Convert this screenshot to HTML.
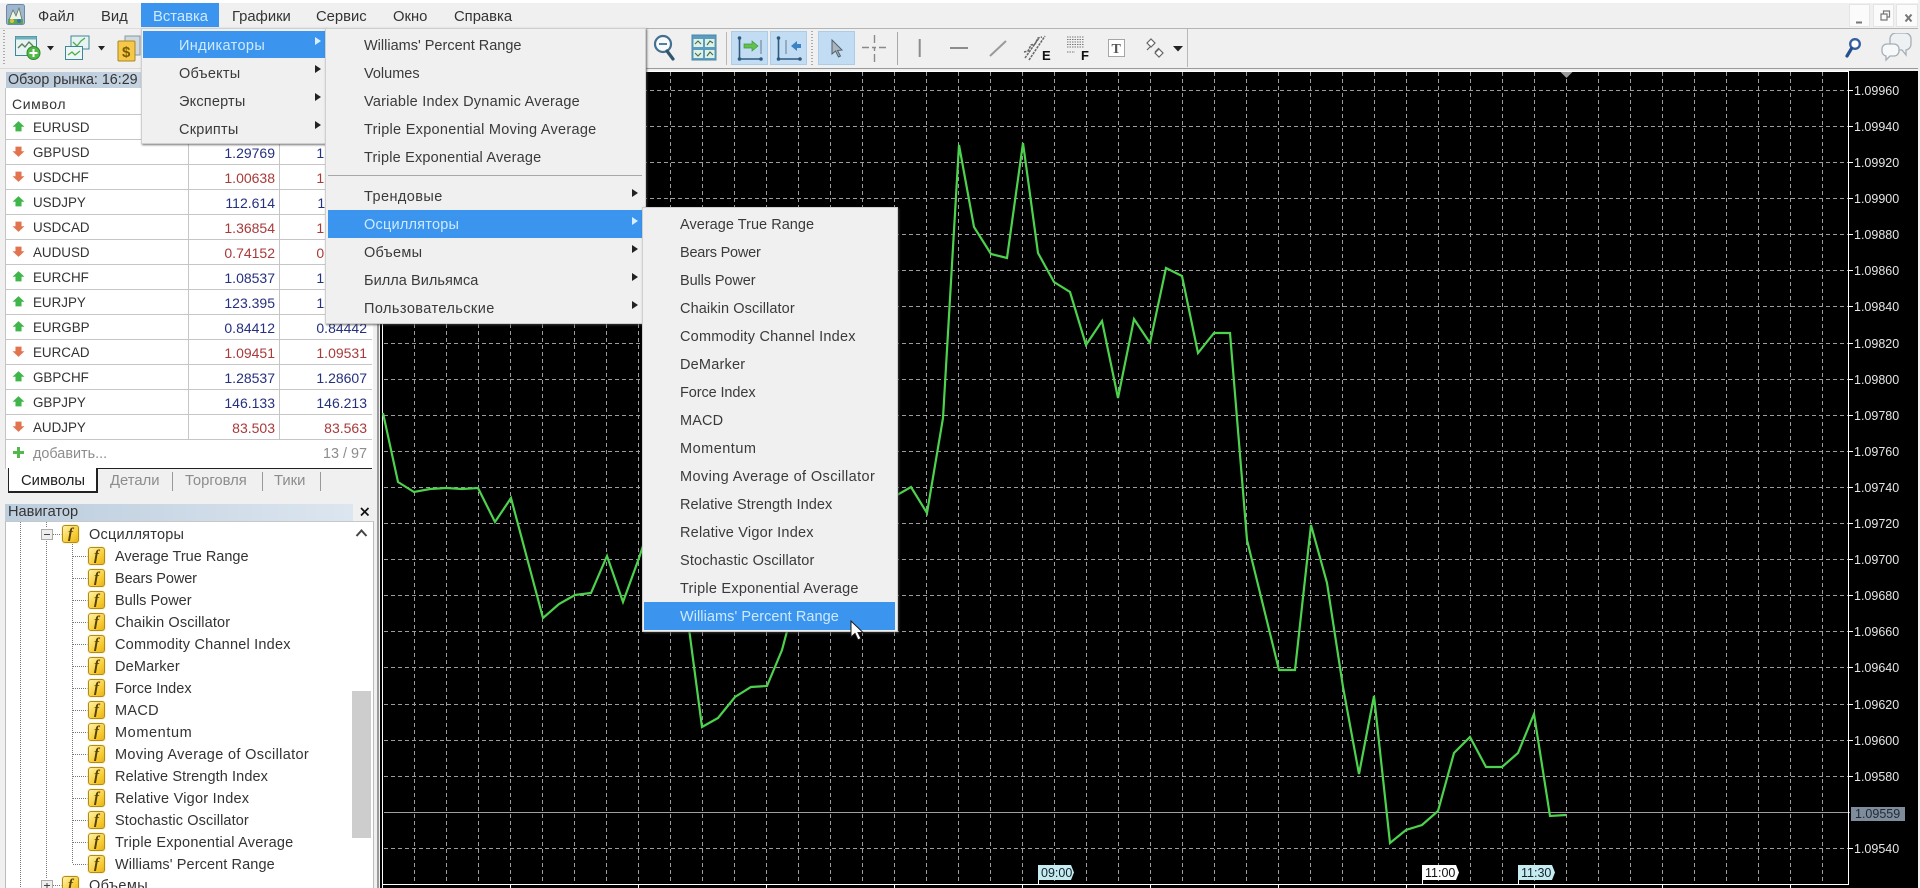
<!DOCTYPE html>
<html lang="ru"><head><meta charset="utf-8"><title>MetaTrader</title>
<style>
html,body{margin:0;padding:0;width:1920px;height:888px;overflow:hidden;background:#f0f0f0}
body{position:relative;font-family:"Liberation Sans","Noto Sans CJK SC",sans-serif;font-size:14.5px;color:#333}
div{box-sizing:border-box}
.a{position:absolute}
.t{position:absolute;white-space:nowrap;line-height:20px;height:20px;margin-top:1px}
.m{font-size:14.5px;color:#3a3a3a}
.hl{color:#cdeaff}
.sym{font-size:13.4px;left:33px;color:#333}
.p1,.p2{font-size:14px;text-align:right;width:70px}
.p1{left:205px}.p2{left:297px}
.b{color:#25307f}.r{color:#a83a3a}
.sep{position:absolute;left:6px;width:366px;height:1px;background:#c6c6c6}
.menu{position:absolute;background:#f0f0f0;box-shadow:1px 1px 2px rgba(70,70,70,.75);border:1px solid #cfcfcf}
.sel{position:absolute;background:#3b95ef}
.ar{position:absolute;width:0;height:0;border-left:6px solid #222;border-top:4.5px solid transparent;border-bottom:4.5px solid transparent}
.ar.w{border-left-color:#d8eeff}
.f{position:absolute;width:17px;height:18px;border:1px solid #ad8b1f;border-radius:3px;background:linear-gradient(135deg,#fff3a8,#f6c92f 70%,#e9b31e);font:italic bold 15px/16px "Liberation Serif",serif;color:#574100;text-align:center;box-shadow:0 0 0 1px rgba(255,240,190,.7)}
.n{font-size:14.5px;left:115px;color:#333}
.bar{font-size:14.8px}
.tab{font-size:14.8px;color:#8c8c8c}
.btn{position:absolute;top:31px;height:34px;background:#c2ddf3;border:1px solid #aacde9}
.wb{position:absolute;top:4px;height:23px;background:#fbfbfb;border:1px solid #e4e4e4}
</style></head><body>

<!-- chart background -->
<div class="a" style="left:380px;top:71px;width:1538px;height:817px;background:#000"></div>

<svg class="a" style="left:0;top:0" width="1920" height="888" viewBox="0 0 1920 888" font-family="Liberation Sans, sans-serif">
<!-- grid -->
<path shape-rendering="crispEdges" fill="none" stroke="#9c9c9c" stroke-width="1" stroke-dasharray="4 3" d="M414.5 72V884M446.5 72V884M478.5 72V884M510.5 72V884M542.5 72V884M574.5 72V884M606.5 72V884M638.5 72V884M670.5 72V884M702.5 72V884M734.5 72V884M766.5 72V884M798.5 72V884M830.5 72V884M862.5 72V884M894.5 72V884M926.5 72V884M958.5 72V884M990.5 72V884M1022.5 72V884M1054.5 72V884M1086.5 72V884M1118.5 72V884M1150.5 72V884M1182.5 72V884M1214.5 72V884M1246.5 72V884M1278.5 72V884M1310.5 72V884M1342.5 72V884M1374.5 72V884M1406.5 72V884M1438.5 72V884M1470.5 72V884M1502.5 72V884M1534.5 72V884M1566.5 72V884M1598.5 72V884M1630.5 72V884M1662.5 72V884M1694.5 72V884M1726.5 72V884M1758.5 72V884M1790.5 72V884M1822.5 72V884"/>
<path shape-rendering="crispEdges" fill="none" stroke="#9c9c9c" stroke-width="1" stroke-dasharray="4 3" d="M384 90.5H1848M384 126.5H1848M384 162.5H1848M384 198.5H1848M384 234.5H1848M384 270.5H1848M384 306.5H1848M384 343.5H1848M384 379.5H1848M384 415.5H1848M384 451.5H1848M384 487.5H1848M384 523.5H1848M384 559.5H1848M384 595.5H1848M384 631.5H1848M384 667.5H1848M384 704.5H1848M384 740.5H1848M384 776.5H1848M384 848.5H1848"/>
<path shape-rendering="crispEdges" stroke="#a0a0a0" stroke-width="1" d="M384 812.5H1850"/>
<!-- frame -->
<path shape-rendering="crispEdges" fill="none" stroke="#fff" stroke-width="1.4" d="M382.5 888V71.5H1848.5V884.5H382.5"/>
<path shape-rendering="crispEdges" stroke="#fff" d="M638.5 884V888M766.5 884V888M894.5 884V888M1022.5 884V888M1150.5 884V888M1278.5 884V888M1406.5 884V888M1534.5 884V888M1662.5 884V888M1790.5 884V888M510.5 884V888"/>
<path shape-rendering="crispEdges" stroke="#fff" d="M1849 90.5H1853M1849 126.5H1853M1849 162.5H1853M1849 198.5H1853M1849 234.5H1853M1849 270.5H1853M1849 306.5H1853M1849 343.5H1853M1849 379.5H1853M1849 415.5H1853M1849 451.5H1853M1849 487.5H1853M1849 523.5H1853M1849 559.5H1853M1849 595.5H1853M1849 631.5H1853M1849 667.5H1853M1849 704.5H1853M1849 740.5H1853M1849 776.5H1853M1849 848.5H1853"/>
<polygon points="1560.5,72 1572.5,72 1566.5,78" fill="#9a9a9a"/>
<!-- price line -->
<polyline fill="none" stroke="#4dd24d" stroke-width="2.2" stroke-linejoin="miter" points="383,413 398,482 414,492 430,489 446,488 462,489 478,488 495,522 511,498 527,558 543,618 559,604 575,595 591,593 607,556 623,602 639,558 655,510 671,560 686,606 702,727 718,718 735,697 751,687 767,686 782,650 798,590 830,520 862,510 894,497 897,495 911,487 927,513 943,418 959,145 974,227 991,254 1007,258 1023,143 1038,253 1054,282 1070,292 1086,345 1102,321 1118,398 1134,319 1150,343 1166,268 1182,276 1198,353 1214,333 1230,333 1247,540 1263,605 1279,670 1295,670 1311,525 1327,583 1343,687 1359,774 1374,696 1390,843 1406,830 1422,825 1438,811 1454,753 1470,737 1486,767 1502,767 1518,753 1534,714 1550,816 1566,815"/>
<!-- axis labels -->
<g fill="#e6e6e6" font-size="12.5">
<text x="1854" y="95">1.09960</text><text x="1854" y="131">1.09940</text><text x="1854" y="167">1.09920</text><text x="1854" y="203">1.09900</text><text x="1854" y="239">1.09880</text><text x="1854" y="275">1.09860</text><text x="1854" y="311">1.09840</text><text x="1854" y="348">1.09820</text><text x="1854" y="384">1.09800</text><text x="1854" y="420">1.09780</text><text x="1854" y="456">1.09760</text><text x="1854" y="492">1.09740</text><text x="1854" y="528">1.09720</text><text x="1854" y="564">1.09700</text><text x="1854" y="600">1.09680</text><text x="1854" y="636">1.09660</text><text x="1854" y="672">1.09640</text><text x="1854" y="709">1.09620</text><text x="1854" y="745">1.09600</text><text x="1854" y="781">1.09580</text><text x="1854" y="853">1.09540</text>
</g>
<rect x="1851" y="807" width="54" height="14" fill="#7f8c9b"/>
<text x="1855" y="818" font-size="12.5" fill="#1f2a36">1.09559</text>
<!-- time labels -->
<polygon points="1038,865 1071,865 1074,872.5 1071,880 1038,880" fill="#c6ecf0"/>
<text x="1041" y="877" font-size="12.5" fill="#123">09:00</text>
<polygon points="1422,865 1456,865 1459,872.5 1456,880 1422,880" fill="#fff"/>
<text x="1425" y="877" font-size="12.5" fill="#111">11:00</text>
<polygon points="1518,865 1552,865 1555,872.5 1552,880 1518,880" fill="#c6ecf0"/>
<text x="1521" y="877" font-size="12.5" fill="#123">11:30</text>
<path shape-rendering="crispEdges" stroke="#fff" d="M1038.5 880V884M1422.5 880V884M1518.5 880V884"/>
</svg>

<!-- bar chrome -->
<div class="a" style="left:0;top:0;width:1920px;height:3px;background:#fff"></div>
<div class="a" style="left:0;top:28px;width:1920px;height:1px;background:linear-gradient(90deg,#dcdcdc 0 640px,#b4b4b4 640px)"></div>
<div class="a" style="left:0;top:68px;width:1920px;height:1px;background:linear-gradient(90deg,#d8d8d8 0 640px,#9a9a9a 640px)"></div>
<div class="a" style="left:1918px;top:0;width:2px;height:888px;background:#f0f0f0"></div>

<!-- logo -->
<svg class="a" style="left:6px;top:4px" width="20" height="22" viewBox="0 0 20 22">
<rect x="0.5" y="0.5" width="18" height="20" rx="2" fill="#9fb6d0" stroke="#6e88a6"/>
<path d="M3 16L7 6l3 6 3-8 3 12z" fill="#eef4ea" stroke="#58704d" stroke-width=".7"/>
<rect x="2" y="15" width="15" height="5" fill="#5aa554"/><circle cx="6" cy="17" r="2" fill="#d9c14a"/><circle cx="13" cy="17" r="2" fill="#3d6fb8"/>
</svg>

<!-- menubar -->
<div class="t bar" style="left:38px;top:6px">Файл</div>
<div class="t bar" style="left:101px;top:6px">Вид</div>
<div class="a" style="left:141px;top:3px;width:78px;height:24px;background:#3b95ef"></div>
<div class="t bar hl" style="left:153px;top:6px">Вставка</div>
<div class="t bar" style="left:232px;top:6px">Графики</div>
<div class="t bar" style="left:316px;top:6px">Сервис</div>
<div class="t bar" style="left:393px;top:6px">Окно</div>
<div class="t bar" style="left:454px;top:6px">Справка</div>

<!-- window buttons -->
<div class="wb" style="left:1849px;width:21px"></div>
<div class="wb" style="left:1873px;width:21px"></div>
<div class="wb" style="left:1896px;width:22px"></div>
<svg class="a" style="left:1849px;top:4px" width="70" height="23" viewBox="0 0 70 23" fill="none" stroke="#777">
<path d="M7 18.500H13" stroke-width="2"/>
<path d="M32 10h6v6h-6zM34.500 9.500V7h6v6h-2" stroke-width="1.200"/>
<path d="M56.500 10.500l6 7M62.500 10.500l-6 7" stroke-width="2"/>
</svg>

<!-- toolbar grips -->
<div class="a" style="left:3px;top:30px;width:2px;height:35px;background:repeating-linear-gradient(#aaa 0 1px,transparent 1px 3px)"></div>
<div class="a" style="left:811px;top:31px;width:2px;height:34px;background:repeating-linear-gradient(#aaa 0 1px,transparent 1px 3px)"></div>

<!-- toolbar icons left -->
<svg class="a" style="left:10px;top:32px" width="135" height="32" viewBox="10 32 135 32">
<rect x="15.500" y="36.500" width="21" height="19" fill="#e8f3f4" stroke="#3f8796"/><rect x="15.500" y="36.500" width="21" height="3" fill="#6fb0bc"/>
<path d="M18 48l4-4 3 3 4-5 4 4" fill="none" stroke="#5c7f5a" stroke-width="1.400"/>
<circle cx="33.500" cy="53" r="6.500" fill="#52b948" stroke="#2f8a2c"/><path d="M33.500 49v8M29.500 53h8" stroke="#fff" stroke-width="2"/>
<polygon points="47,46 54,46 50.500,50.500" fill="#222"/>
<rect x="71" y="36" width="18" height="13" fill="#e8f3f4" stroke="#3f8796"/><path d="M73 42l4 4 4-5 4-3" fill="none" stroke="#4fae4a" stroke-width="1.300"/>
<rect x="65.500" y="46.500" width="17" height="13" fill="#eef6f6" stroke="#3f8796"/><path d="M68 55l4-3 3 3 5-4" fill="none" stroke="#4fae4a" stroke-width="1.300"/>
<polygon points="98,46 105,46 101.500,50.500" fill="#222"/>
<rect x="125" y="36" width="15" height="19" fill="#cfd9df" stroke="#8a979e"/>
<rect x="118" y="41" width="17" height="20" rx="1" fill="#f5c84a" stroke="#a8861f"/>
<text x="122" y="57" font-size="15" font-weight="bold" fill="#7a5b00">$</text>
</svg>

<!-- toolbar icons middle -->
<div class="btn" style="left:731px;width:37px"></div>
<div class="btn" style="left:770px;width:37px"></div>
<div class="btn" style="left:818px;width:37px"></div>
<svg class="a" style="left:640px;top:29px" width="560" height="38" viewBox="640 29 560 38" font-family="Liberation Sans, sans-serif">
<circle cx="663" cy="44" r="8" fill="#f6fafd" stroke="#44708f" stroke-width="2.200"/><path d="M659 44h8" stroke="#44708f" stroke-width="1.800"/><path d="M667 51l6 8" stroke="#33566f" stroke-width="3.200" stroke-linecap="round"/>
<rect x="692" y="35" width="24" height="25" fill="#5a9dc0" stroke="#4a86a4"/>
<rect x="693.500" y="39" width="9.500" height="8" fill="#dff0e4"/><rect x="705" y="39" width="9.500" height="8" fill="#dff0e4"/><rect x="693.500" y="50" width="9.500" height="8" fill="#dff0e4"/><rect x="705" y="50" width="9.500" height="8" fill="#dff0e4"/>
<path d="M695 44l3-3 3 3M707 45l3-4 3 2M695 53l3 3 3-3M707 56l3-4 3 3" fill="none" stroke="#3d6d4f" stroke-width="1.100"/>
<path d="M726.500 32V65" stroke="#b8b8b8"/>
<path d="M739.500 37V59H761" fill="none" stroke="#2f5a7e" stroke-width="1.600"/><circle cx="739.500" cy="38" r="1.800" fill="#2f5a7e"/><circle cx="739.500" cy="59" r="1.800" fill="#2f5a7e"/><circle cx="761" cy="59" r="1.800" fill="#2f5a7e"/><path d="M761 40V54" stroke="#5c7f94"/>
<path d="M744 44h8v-3l6 5-6 5v-3h-8z" fill="#62c24f" stroke="#3f963a" stroke-width=".7"/>
<path d="M778.500 37V59H800" fill="none" stroke="#2f5a7e" stroke-width="1.600"/><circle cx="778.500" cy="38" r="1.800" fill="#2f5a7e"/><circle cx="778.500" cy="59" r="1.800" fill="#2f5a7e"/><circle cx="800" cy="59" r="1.800" fill="#2f5a7e"/><path d="M786 40V54" stroke="#5c7f94"/>
<path d="M801 44h-4v-3l-6 5 6 5v-3h4z" fill="#3c83c4"/>
<path d="M832 40l0 14 3.500-3 3 6 2-1-3-5.500 4.500-.5z" fill="#aab6bf" stroke="#52606b" stroke-width="1"/>
<path d="M874.500 35v8M874.500 47v4M874.500 54v8M862 47.500h7M872 47.500h4M879 47.500h7" stroke="#8a8a8a" stroke-width="1.400" fill="none"/>
<path d="M897.500 32V65" stroke="#a8a8a8"/>
<path d="M919.700 39V57" stroke="#8c8c8c" stroke-width="2"/>
<path d="M950 48H968" stroke="#8c8c8c" stroke-width="2"/>
<path d="M990 56L1006 41" stroke="#9a9a9a" stroke-width="2"/>
<g fill="none" stroke="#666" stroke-width="1.500" stroke-dasharray="2.500 1"><path d="M1025 58l14-20M1029 60l16-24M1024 52l4-1 3-6 4-1 3-6 4-1"/></g>
<text x="1042" y="60" font-size="13" font-weight="bold" fill="#111" font-family="Liberation Sans, sans-serif">E</text>
<g fill="none" stroke="#777" stroke-dasharray="1.500 1"><path d="M1067 37h17M1067 39.500h17M1067 42h17M1067 44.500h17M1067 47h17M1067 52h8"/></g>
<text x="1081" y="60" font-size="13" font-weight="bold" fill="#111" font-family="Liberation Sans, sans-serif">F</text>
<rect x="1108.500" y="39.500" width="16" height="17" fill="#fff" stroke="#555" stroke-dasharray="1 1"/>
<text x="1111.500" y="53" font-size="14" font-weight="bold" fill="#555" font-family="Liberation Serif, serif">T</text>
<path d="M1147 43l4-4 4 4-4 4zM1155 53l4-4 4 4-4 4zM1147 50l4-4M1159 48l-4 4" fill="#fff" stroke="#666" stroke-width="1.200"/>
<polygon points="1173,46 1183,46 1178,51.500" fill="#222"/>
<path d="M1187.500 29V68" stroke="#b8b8b8"/>
</svg>

<!-- toolbar right -->
<svg class="a" style="left:1840px;top:33px" width="78" height="30" viewBox="1840 33 78 30">
<circle cx="1855" cy="44" r="4.800" fill="#fff" stroke="#345f9e" stroke-width="2.300"/><path d="M1851.500 48.500l-4.500 7.500" stroke="#25508f" stroke-width="3.200" stroke-linecap="round"/>
<path d="M1890 39a6 6 0 0 1 6-6h9a6 6 0 0 1 6 6v5a6 6 0 0 1-5 6v5l-4-5h-6a6 6 0 0 1-6-6z" fill="#eef1f3" stroke="#a5aeb5" stroke-width="1.300"/>
<path d="M1887 44h7a5 5 0 0 1 5 5v2a5 5 0 0 1-5 5h-4l-4 4v-4a5 5 0 0 1-4-5v-2a5 5 0 0 1 5-5z" fill="#f7f8f9" stroke="#a5aeb5" stroke-width="1.300"/>
</svg>

<!-- market watch -->
<div class="a" style="left:6px;top:72px;width:366px;height:16px;background:linear-gradient(90deg,#b9cada,#dbe5ef)"></div>
<div class="t" style="left:8px;top:69px;font-size:14.3px">Обзор рынка: 16:29</div>
<div class="a" style="left:5px;top:88px;width:368px;height:381px;background:#fff;border-left:1px solid #c4c4c4"></div>
<div class="a" style="left:188px;top:88px;width:1px;height:351px;background:#c6c6c6"></div>
<div class="a" style="left:279px;top:88px;width:1px;height:351px;background:#c6c6c6"></div>
<div class="t" style="left:12px;top:93px;font-size:14px;letter-spacing:.6px">Символ</div>
<div class="sep" style="top:114px"></div><div class="sep" style="top:139px"></div><div class="sep" style="top:164px"></div><div class="sep" style="top:189px"></div><div class="sep" style="top:214px"></div><div class="sep" style="top:239px"></div><div class="sep" style="top:264px"></div><div class="sep" style="top:289px"></div><div class="sep" style="top:314px"></div><div class="sep" style="top:339px"></div><div class="sep" style="top:364px"></div><div class="sep" style="top:389px"></div><div class="sep" style="top:414px"></div><div class="sep" style="top:439px"></div>

<svg width="0" height="0" style="position:absolute"><defs>
<symbol id="up" viewBox="0 0 12 12"><path d="M6 1L11.500 6.200H8.800V10.500H3.200V6.200H.5z" fill="#3fb54a"/></symbol>
<symbol id="dn" viewBox="0 0 12 12"><path d="M6 11L11.500 5.800H8.800V1.500H3.200V5.800H.5z" fill="#e2734f"/></symbol>
</defs></svg>
<svg class="a" style="left:12px;top:120px" width="13" height="13"><use href="#up"/></svg>
<svg class="a" style="left:12px;top:145px" width="13" height="13"><use href="#dn"/></svg>
<svg class="a" style="left:12px;top:170px" width="13" height="13"><use href="#dn"/></svg>
<svg class="a" style="left:12px;top:195px" width="13" height="13"><use href="#up"/></svg>
<svg class="a" style="left:12px;top:220px" width="13" height="13"><use href="#dn"/></svg>
<svg class="a" style="left:12px;top:245px" width="13" height="13"><use href="#dn"/></svg>
<svg class="a" style="left:12px;top:270px" width="13" height="13"><use href="#up"/></svg>
<svg class="a" style="left:12px;top:295px" width="13" height="13"><use href="#up"/></svg>
<svg class="a" style="left:12px;top:320px" width="13" height="13"><use href="#up"/></svg>
<svg class="a" style="left:12px;top:345px" width="13" height="13"><use href="#dn"/></svg>
<svg class="a" style="left:12px;top:370px" width="13" height="13"><use href="#up"/></svg>
<svg class="a" style="left:12px;top:395px" width="13" height="13"><use href="#up"/></svg>
<svg class="a" style="left:12px;top:420px" width="13" height="13"><use href="#dn"/></svg>

<div class="t sym" style="top:117px">EURUSD</div>
<div class="t sym" style="top:142px">GBPUSD</div><div class="t p1 b" style="top:142px">1.29769</div><div class="t p2 b" style="top:142px">1.29849</div>
<div class="t sym" style="top:167px">USDCHF</div><div class="t p1 r" style="top:167px">1.00638</div><div class="t p2 r" style="top:167px">1.00718</div>
<div class="t sym" style="top:192px">USDJPY</div><div class="t p1 b" style="top:192px">112.614</div><div class="t p2 b" style="top:192px">112.664</div>
<div class="t sym" style="top:217px">USDCAD</div><div class="t p1 r" style="top:217px">1.36854</div><div class="t p2 r" style="top:217px">1.36934</div>
<div class="t sym" style="top:242px">AUDUSD</div><div class="t p1 r" style="top:242px">0.74152</div><div class="t p2 r" style="top:242px">0.74222</div>
<div class="t sym" style="top:267px">EURCHF</div><div class="t p1 b" style="top:267px">1.08537</div><div class="t p2 b" style="top:267px">1.08617</div>
<div class="t sym" style="top:292px">EURJPY</div><div class="t p1 b" style="top:292px">123.395</div><div class="t p2 b" style="top:292px">123.455</div>
<div class="t sym" style="top:317px">EURGBP</div><div class="t p1 b" style="top:317px">0.84412</div><div class="t p2 b" style="top:317px">0.84442</div>
<div class="t sym" style="top:342px">EURCAD</div><div class="t p1 r" style="top:342px">1.09451</div><div class="t p2 r" style="top:342px">1.09531</div>
<div class="t sym" style="top:367px">GBPCHF</div><div class="t p1 b" style="top:367px">1.28537</div><div class="t p2 b" style="top:367px">1.28607</div>
<div class="t sym" style="top:392px">GBPJPY</div><div class="t p1 b" style="top:392px">146.133</div><div class="t p2 b" style="top:392px">146.213</div>
<div class="t sym" style="top:417px">AUDJPY</div><div class="t p1 r" style="top:417px">83.503</div><div class="t p2 r" style="top:417px">83.563</div>
<svg class="a" style="left:12px;top:446px" width="13" height="13"><path d="M6.500 1v11M1 6.500h11" stroke="#55b84f" stroke-width="3"/></svg>
<div class="t" style="left:33px;top:443px;font-size:14.4px;color:#8d8d8d">добавить...</div>
<div class="t" style="left:297px;top:443px;width:70px;text-align:right;font-size:14.4px;color:#8d8d8d">13 / 97</div>

<!-- tabs -->
<div class="a" style="left:5px;top:469px;width:368px;height:30px;background:#f0f0f0"></div>
<div class="a" style="left:8px;top:468px;width:364px;height:1px;background:#222"></div>
<div class="a" style="left:8px;top:468px;width:90px;height:25px;background:#fff;border:1px solid #222;border-top:none;border-right-width:2px;border-bottom-width:2px"></div>
<div class="t" style="left:21px;top:470px;font-size:14.8px;color:#222">Символы</div>
<div class="t tab" style="left:110px;top:470px">Детали</div>
<div class="a" style="left:172px;top:472px;width:1px;height:19px;background:#999"></div>
<div class="t tab" style="left:185px;top:470px">Торговля</div>
<div class="a" style="left:262px;top:472px;width:1px;height:19px;background:#999"></div>
<div class="t tab" style="left:274px;top:470px">Тики</div>
<div class="a" style="left:320px;top:472px;width:1px;height:19px;background:#999"></div>

<!-- navigator -->
<div class="a" style="left:5px;top:504px;width:348px;height:17px;background:linear-gradient(90deg,#bccddd,#dce6f0)"></div>
<div class="t" style="left:8px;top:501px;font-size:14.6px">Навигатор</div>
<svg class="a" style="left:359px;top:506px" width="12" height="12"><path d="M2 2l7.500 7.500M9.500 2L2 9.500" stroke="#111" stroke-width="1.700"/></svg>
<div class="a" style="left:5px;top:521px;width:369px;height:367px;background:#fff;border-left:1px solid #bcbcbc;border-right:1px solid #bcbcbc;border-top:1px solid #c8c8c8"></div>
<div class="a" style="left:377px;top:69px;width:2px;height:819px;background:#9a9a9a"></div>
<div class="a" style="left:352px;top:691px;width:19px;height:147px;background:#cdcdcd"></div>
<svg class="a" style="left:354px;top:527px" width="15" height="12"><path d="M2.500 9L7.500 3.500l5 5.500" fill="none" stroke="#444" stroke-width="2"/></svg>

<svg class="a" style="left:6px;top:522px" width="345" height="366" viewBox="6 522 345 366">
<g stroke="#777" stroke-dasharray="1 1" fill="none" shape-rendering="crispEdges">
<path d="M20.500 522V888M46.500 522V528M46.500 541V878M72.500 544V864"/>
<path d="M53 534.500H62M53 885.500H62"/>
<path d="M73 556.500H88M73 578.500H88M73 600.500H88M73 622.500H88M73 644.500H88M73 666.500H88M73 688.500H88M73 710.500H88M73 732.500H88M73 754.500H88M73 776.500H88M73 798.500H88M73 820.500H88M73 842.500H88M73 864.500H88"/>
</g>
<rect x="41.500" y="529.500" width="11" height="10" fill="#eee" stroke="#aaa"/><path d="M44 534.500h6" stroke="#444"/>
<rect x="41.500" y="880.500" width="11" height="10" fill="#eee" stroke="#aaa"/><path d="M44 885.500h6M47 883v5" stroke="#444"/>
</svg>

<div class="f" style="left:62px;top:525px">f</div><div class="t n" style="left:89px;top:524px;letter-spacing:.22px">Осцилляторы</div>
<div class="f" style="left:88px;top:547px">f</div><div class="t n" style="top:546px">Average True Range</div>
<div class="f" style="left:88px;top:569px">f</div><div class="t n" style="top:568px;letter-spacing:-.1px">Bears Power</div>
<div class="f" style="left:88px;top:591px">f</div><div class="t n" style="top:590px">Bulls Power</div>
<div class="f" style="left:88px;top:613px">f</div><div class="t n" style="top:612px;letter-spacing:.13px">Chaikin Oscillator</div>
<div class="f" style="left:88px;top:635px">f</div><div class="t n" style="top:634px;letter-spacing:.21px">Commodity Channel Index</div>
<div class="f" style="left:88px;top:657px">f</div><div class="t n" style="top:656px;letter-spacing:.15px">DeMarker</div>
<div class="f" style="left:88px;top:679px">f</div><div class="t n" style="top:678px">Force Index</div>
<div class="f" style="left:88px;top:701px">f</div><div class="t n" style="top:700px;letter-spacing:.3px">MACD</div>
<div class="f" style="left:88px;top:723px">f</div><div class="t n" style="top:722px;letter-spacing:.6px">Momentum</div>
<div class="f" style="left:88px;top:745px">f</div><div class="t n" style="top:744px;letter-spacing:.35px">Moving Average of Oscillator</div>
<div class="f" style="left:88px;top:767px">f</div><div class="t n" style="top:766px;letter-spacing:.1px">Relative Strength Index</div>
<div class="f" style="left:88px;top:789px">f</div><div class="t n" style="top:788px;letter-spacing:.24px">Relative Vigor Index</div>
<div class="f" style="left:88px;top:811px">f</div><div class="t n" style="top:810px;letter-spacing:.12px">Stochastic Oscillator</div>
<div class="f" style="left:88px;top:833px">f</div><div class="t n" style="top:832px;letter-spacing:.23px">Triple Exponential Average</div>
<div class="f" style="left:88px;top:855px">f</div><div class="t n" style="top:854px;letter-spacing:.1px">Williams' Percent Range</div>
<div class="f" style="left:62px;top:876px">f</div><div class="t n" style="left:89px;top:875px;letter-spacing:.4px">Объемы</div>

<!-- menu 1 -->
<div class="menu" style="left:141px;top:28px;width:185px;height:116px"></div>
<div class="sel" style="left:143px;top:31px;width:182px;height:27px"></div>
<div class="t m hl" style="left:179px;top:35px;letter-spacing:.37px">Индикаторы</div><div class="ar w" style="left:315px;top:37px"></div>
<div class="t m" style="left:179px;top:63px;letter-spacing:.23px">Объекты</div><div class="ar" style="left:315px;top:65px"></div>
<div class="t m" style="left:179px;top:91px;letter-spacing:.2px">Эксперты</div><div class="ar" style="left:315px;top:93px"></div>
<div class="t m" style="left:179px;top:119px;letter-spacing:.23px">Скрипты</div><div class="ar" style="left:315px;top:121px"></div>

<!-- menu 2 -->
<div class="menu" style="left:325px;top:28px;width:321px;height:296px"></div>
<div class="t m" style="left:364px;top:35px">Williams' Percent Range</div>
<div class="t m" style="left:364px;top:63px">Volumes</div>
<div class="t m" style="left:364px;top:91px;letter-spacing:.23px">Variable Index Dynamic Average</div>
<div class="t m" style="left:364px;top:119px;letter-spacing:.28px">Triple Exponential Moving Average</div>
<div class="t m" style="left:364px;top:147px;letter-spacing:.19px">Triple Exponential Average</div>
<div class="a" style="left:328px;top:175px;width:314px;height:1px;background:#a8a8a8"></div>
<div class="t m" style="left:364px;top:186px;letter-spacing:.43px">Трендовые</div><div class="ar" style="left:632px;top:189px"></div>
<div class="sel" style="left:328px;top:210px;width:314px;height:28px"></div>
<div class="t m hl" style="left:364px;top:214px;letter-spacing:.22px">Осцилляторы</div><div class="ar w" style="left:632px;top:217px"></div>
<div class="t m" style="left:364px;top:242px;letter-spacing:.28px">Объемы</div><div class="ar" style="left:632px;top:245px"></div>
<div class="t m" style="left:364px;top:270px;letter-spacing:.06px">Билла Вильямса</div><div class="ar" style="left:632px;top:273px"></div>
<div class="t m" style="left:364px;top:298px;letter-spacing:.43px">Пользовательские</div><div class="ar" style="left:632px;top:301px"></div>

<!-- menu 3 -->
<div class="menu" style="left:642px;top:207px;width:256px;height:425px"></div>
<div class="t m" style="left:680px;top:214px;letter-spacing:.03px">Average True Range</div>
<div class="t m" style="left:680px;top:242px;letter-spacing:-.22px">Bears Power</div>
<div class="t m" style="left:680px;top:270px;letter-spacing:-.1px">Bulls Power</div>
<div class="t m" style="left:680px;top:298px;letter-spacing:.11px">Chaikin Oscillator</div>
<div class="t m" style="left:680px;top:326px;letter-spacing:.21px">Commodity Channel Index</div>
<div class="t m" style="left:680px;top:354px;letter-spacing:.2px">DeMarker</div>
<div class="t m" style="left:680px;top:382px;letter-spacing:-.1px">Force Index</div>
<div class="t m" style="left:680px;top:410px;letter-spacing:.15px">MACD</div>
<div class="t m" style="left:680px;top:438px;letter-spacing:.49px">Momentum</div>
<div class="t m" style="left:680px;top:466px;letter-spacing:.39px">Moving Average of Oscillator</div>
<div class="t m" style="left:680px;top:494px;letter-spacing:.07px">Relative Strength Index</div>
<div class="t m" style="left:680px;top:522px;letter-spacing:.21px">Relative Vigor Index</div>
<div class="t m" style="left:680px;top:550px;letter-spacing:.15px">Stochastic Oscillator</div>
<div class="t m" style="left:680px;top:578px;letter-spacing:.24px">Triple Exponential Average</div>
<div class="sel" style="left:644px;top:602px;width:251px;height:28px"></div>
<div class="t m hl" style="left:680px;top:606px;letter-spacing:.06px">Williams' Percent Range</div>

<!-- cursor -->
<svg class="a" style="left:848px;top:619px" width="18" height="24" viewBox="0 0 18 24"><path d="M3 2V18L7 14.500L10 21L13 19.500L10 13.500H15Z" fill="#fff" stroke="#1a1a1a" stroke-width="1"/></svg>

</body></html>
